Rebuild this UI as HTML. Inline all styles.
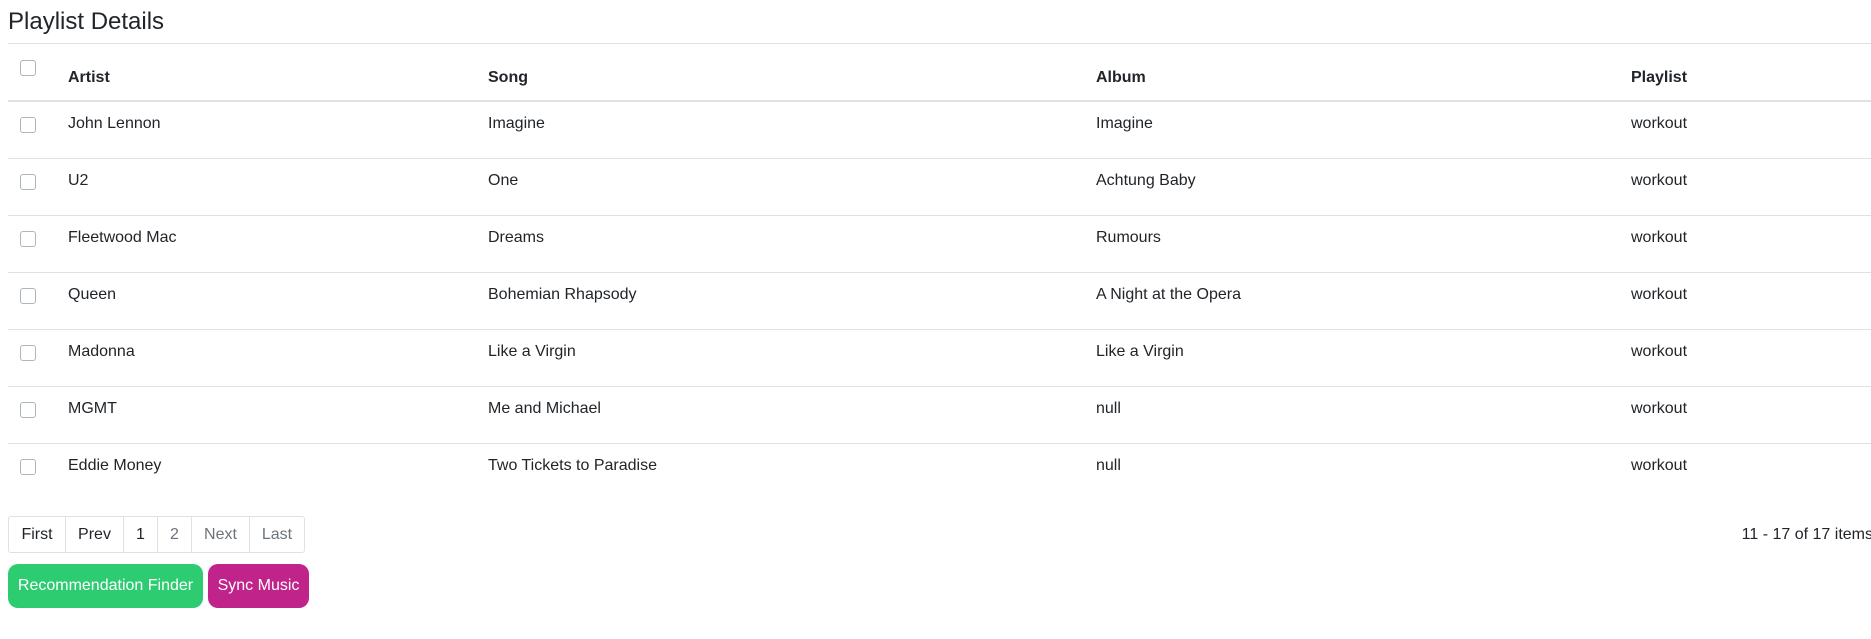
<!DOCTYPE html>
<html><head><style>
body{margin:0;width:1871px;height:639px;background:#fff;font-family:"Liberation Sans",Arial,sans-serif;color:#212529;position:relative;overflow:hidden}
.a{position:absolute;white-space:nowrap}
.t{font-size:16px;line-height:20px}
.h{font-weight:bold;font-size:16px;line-height:20px}
.line{position:absolute;left:8px;right:0;height:1px;background:#dee2e6}
.cb{position:absolute;left:20px;width:14px;height:14px;border:1px solid #adb5bd;border-radius:3px;background:#fff}
</style></head><body>
<div class="a" style="left:8px;top:8px;font-size:24px;line-height:28px">Playlist Details</div>
<div class="line" style="top:43px"></div>
<div class="cb" style="top:60px"></div>
<div class="a h" style="left:68px;top:68px">Artist</div>
<div class="a h" style="left:488px;top:68px">Song</div>
<div class="a h" style="left:1096px;top:68px">Album</div>
<div class="a h" style="left:1631px;top:68px">Playlist</div>
<div class="line" style="top:100px;height:2px"></div>
<div id="rows"></div>
<script>
var d=[["John Lennon","Imagine","Imagine"],["U2","One","Achtung Baby"],["Fleetwood Mac","Dreams","Rumours"],["Queen","Bohemian Rhapsody","A Night at the Opera"],["Madonna","Like a Virgin","Like a Virgin"],["MGMT","Me and Michael","null"],["Eddie Money","Two Tickets to Paradise","null"]];
var h="";for(var i=0;i<d.length;i++){var y=102+i*57;
h+='<div class="cb" style="top:'+(y+15)+'px"></div>';
h+='<div class="a t" style="left:68px;top:'+(y+12)+'px">'+d[i][0]+'</div>';
h+='<div class="a t" style="left:488px;top:'+(y+12)+'px">'+d[i][1]+'</div>';
h+='<div class="a t" style="left:1096px;top:'+(y+12)+'px">'+d[i][2]+'</div>';
h+='<div class="a t" style="left:1631px;top:'+(y+12)+'px">workout</div>';
if(i<6)h+='<div class="line" style="top:'+(y+56)+'px"></div>';}
document.getElementById("rows").innerHTML=h;
</script>
<div class="a" style="left:8px;top:516px;height:35px;border:1px solid #dee2e6;border-radius:3px;display:flex;font-size:16px;line-height:35px">
<span style="width:56px;text-align:center;border-right:1px solid #dee2e6">First</span>
<span style="width:57px;text-align:center;border-right:1px solid #dee2e6">Prev</span>
<span style="width:33px;text-align:center;border-right:1px solid #dee2e6">1</span>
<span style="width:33px;text-align:center;border-right:1px solid #dee2e6;color:#6c757d">2</span>
<span style="width:57px;text-align:center;border-right:1px solid #dee2e6;color:#6c757d">Next</span>
<span style="width:54px;text-align:center;color:#6c757d">Last</span>
</div>
<div class="a t" style="right:-2px;top:525px">11 - 17 of 17 items</div>
<div class="a" style="left:8px;top:564px;width:195px;height:44px;background:#2ecc71;color:#fff;border-radius:10px;font-size:16px;line-height:44px;text-align:center">Recommendation Finder</div>
<div class="a" style="left:208px;top:564px;width:101px;height:44px;background:#c0238a;color:#fff;border-radius:10px;font-size:16px;line-height:44px;text-align:center">Sync Music</div>
</body></html>
